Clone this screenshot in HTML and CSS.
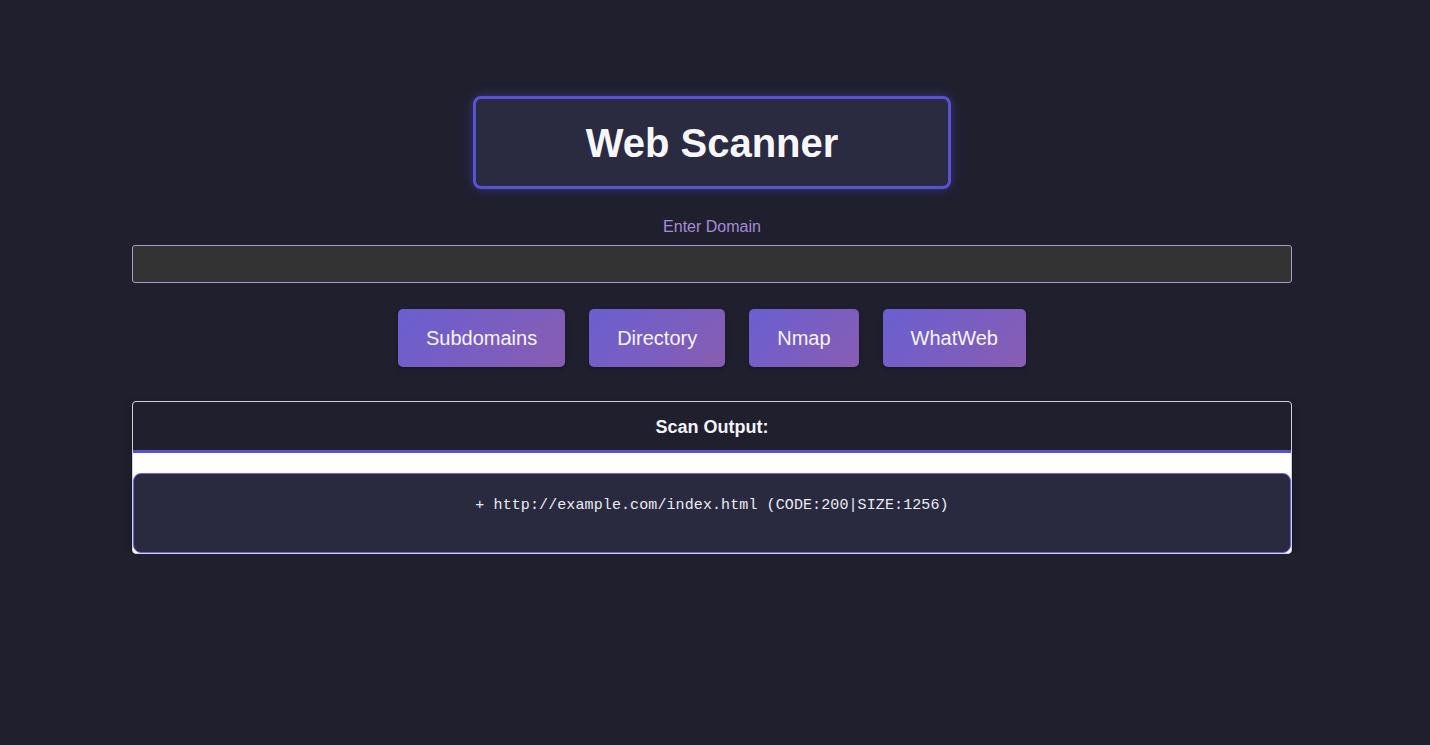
FILE: index.html
```html
<!DOCTYPE html>
<html lang="en">
<head>
<meta charset="utf-8">
<title>Web Scanner</title>
<link rel="stylesheet" href="styles.css">
</head>
<body>
<div class="page">
  <header class="title-wrap">
    <h1 class="title">Web Scanner</h1>
  </header>
  <label class="label" for="domain">Enter Domain</label>
  <input class="domain-input" id="domain" type="text">
  <div class="actions">
    <button class="btn">Subdomains</button>
    <button class="btn">Directory</button>
    <button class="btn">Nmap</button>
    <button class="btn">WhatWeb</button>
  </div>
  <section class="output">
    <div class="output-head">Scan Output:</div>
    <div class="output-gap"></div>
    <div class="output-body"><pre class="output-text">+ http://example.com/index.html (CODE:200|SIZE:1256)</pre></div>
  </section>
</div>
</body>
</html>
```

FILE: styles.css
```css
html, body {
  margin: 0;
  padding: 0;
  background: #1f1f2e;
  font-family: "Liberation Sans", Arial, sans-serif;
  color: #f2f2f8;
}

.page {
  width: 1160px;
  margin: 0 138px 0 132px;
  padding-top: 96px;
  display: flex;
  flex-direction: column;
  align-items: center;
}

.title-wrap {
  display: flex;
  justify-content: center;
}

.title {
  margin: 0;
  width: 478px;
  box-sizing: border-box;
  height: 93px;
  display: flex;
  align-items: center;
  justify-content: center;
  background: #2a2a40;
  border: 3px solid #5b51d3;
  border-radius: 8px;
  box-shadow: 0 0 12px rgba(91, 81, 211, 0.45);
  font-size: 40px;
  font-weight: bold;
  color: #f7f7fb;
  padding-top: 1px;
}

.label {
  margin-top: 28px;
  font-size: 16px;
  line-height: 20px;
  color: #a58cd8;
}

.domain-input {
  margin-top: 8px;
  width: 100%;
  box-sizing: border-box;
  height: 38px;
  background: #333333;
  border: 1px solid #a99cc4;
  border-radius: 3px;
  outline: none;
  color: #fff;
  font-size: 16px;
  padding: 0 10px;
}

.actions {
  margin-top: 26px;
  display: flex;
  gap: 24px;
  justify-content: center;
}

.btn {
  font-family: "Liberation Sans", Arial, sans-serif;
  font-size: 20px;
  line-height: 24px;
  padding: 17px 28px;
  border: none;
  border-radius: 5px;
  color: #f5f3ff;
  background: linear-gradient(135deg, #6a5fd2 0%, #885db0 100%);
  box-shadow: 0 2px 4px rgba(0, 0, 0, 0.25);
  cursor: pointer;
}

.output {
  margin-top: 34px;
  width: 100%;
  box-sizing: border-box;
  border: 1px solid #cfcfd6;
  border-radius: 4px;
  overflow: hidden;
  background: #ffffff;
  box-shadow: 0 2px 6px rgba(0, 0, 0, 0.3);
}

.output-head {
  height: 46px;
  padding-top: 2px;
  display: flex;
  align-items: center;
  justify-content: center;
  background: #1f1f2e;
  font-size: 18px;
  font-weight: bold;
  color: #f4f4fa;
  border-bottom: 3px solid #5b51d3;
}

.output-gap {
  height: 20px;
  background: #ffffff;
}

.output-body {
  height: 80px;
  box-sizing: border-box;
  background: #292a3f;
  border: 1px solid #6f62e0;
  border-radius: 8px;
  padding-top: 23px;
}

.output-text {
  margin: 0;
  text-align: center;
  font-family: "Liberation Mono", "Courier New", monospace;
  font-size: 15px;
  line-height: 18px;
  color: #ececf4;
  letter-spacing: 0.1px;
}
```
